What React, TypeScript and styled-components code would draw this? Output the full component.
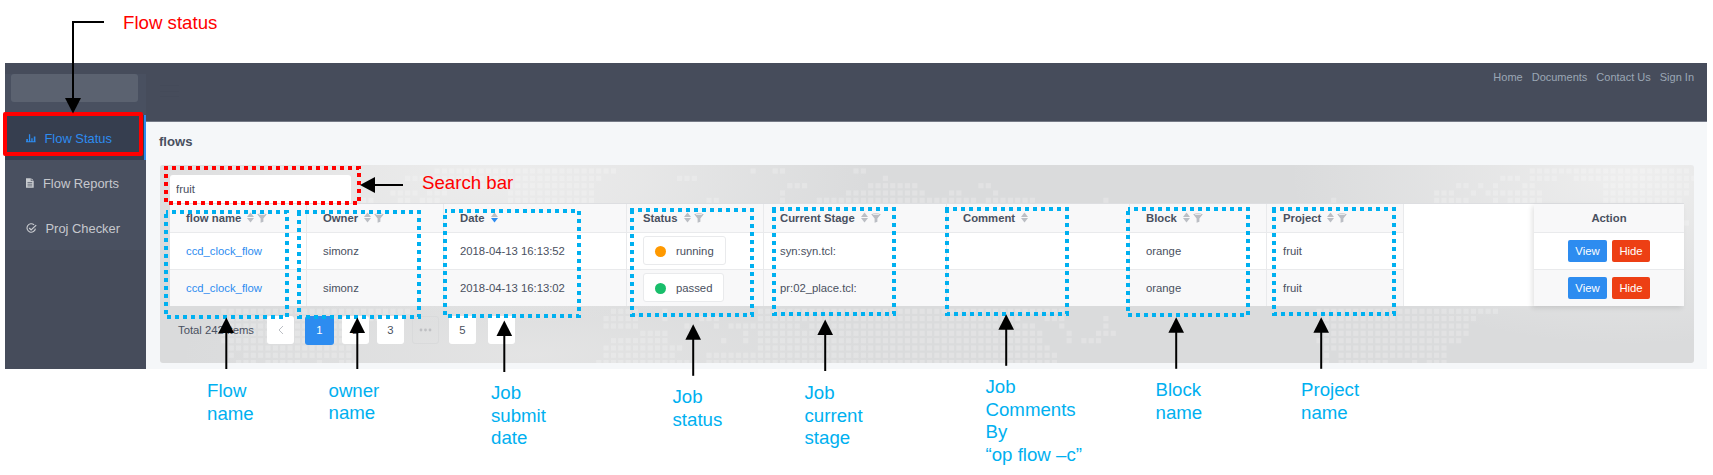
import React from "react";
import styled, { createGlobalStyle } from "styled-components";

const GlobalStyle = createGlobalStyle`
  *, *::before, *::after { box-sizing: border-box; }
  body {
    margin: 0;
    background: #fff;
    color: #495060;
    font-family: "Liberation Sans", Arial, sans-serif;
    font-size: 11.3px;
  }
`;

const Page = styled.div`
  position: relative;
  width: 1713px;
  height: 475px;
  padding: 63px 6px 0 5px;
  overflow: hidden;
`;

const Shell = styled.div`
  display: grid;
  grid-template-columns: 141px 1fr;
  height: 306px;
  background: #f5f7f9;
`;

const Sidebar = styled.aside`
  display: flex;
  flex-direction: column;
  background: #464c5b;
  padding-top: 11px;
`;

const MenuArea = styled.div`
  height: 176px;
  background: #495060;
`;

const Logo = styled.div`
  width: 127px;
  height: 28px;
  margin: 0 0 13px 6px;
  border-radius: 3px;
  background: #5b6270;
`;

const MenuItem = styled.a<{ $active?: boolean; $gap: number }>`
  display: flex;
  align-items: center;
  gap: ${(p) => p.$gap}px;
  height: 45px;
  padding: 1px 0 0 21px;
  font-size: 12.9px;
  color: ${(p) => (p.$active ? "#2d8cf0" : "rgba(255,255,255,0.7)")};
  background: ${(p) => (p.$active ? "#363e4f" : "transparent")};
  border-right: 2px solid ${(p) => (p.$active ? "#2d8cf0" : "transparent")};
`;

const Main = styled.div`
  display: flex;
  flex-direction: column;
`;

const Header = styled.header`
  display: flex;
  justify-content: space-between;
  align-items: flex-start;
  height: 59px;
  padding: 0 13px 0 14px;
  background: #464c5b;
  border-bottom: 1px solid #747986;
`;

const Burger = styled.svg`
  margin-top: 21px;
`;

const Nav = styled.nav`
  display: flex;
  gap: 9px;
  padding-top: 8px;
  line-height: 13px;
  font-size: 11px;
  color: #9ba7b5;
`;

const Content = styled.main`
  padding: 12px 13px 0 14px;
`;

const Title = styled.h1`
  margin: 0 0 0 -1px;
  height: 31px;
  font-size: 13.1px;
  line-height: 15px;
`;

const Panel = styled.section`
  position: relative;
  height: 198px;
  padding: 10px 10px 0 10px;
  border-radius: 3px;
  overflow: hidden;
  background:
    radial-gradient(ellipse 380px 150px at 330px 10px, rgba(238,238,238,0.9) 0%, rgba(236,236,236,0.7) 40%, rgba(236,236,236,0) 100%),
    radial-gradient(ellipse 340px 170px at 1470px 10px, rgba(240,240,240,0.9) 0%, rgba(238,238,238,0.6) 40%, rgba(238,238,238,0) 100%),
    radial-gradient(ellipse 350px 80px at 370px 190px, rgba(230,230,230,0.8) 0%, rgba(228,228,228,0) 100%),
    #dadbdc;
`;

const MapDots = styled.svg`
  position: absolute;
  inset: 0;
`;

const PanelBody = styled.div`
  position: relative;
`;

const Search = styled.input`
  display: block;
  width: 181px;
  height: 28px;
  padding: 0 6px 1px;
  border: 0;
  border-radius: 3px 3px 0 0;
  background: #fff;
  color: #495060;
  font: inherit;
  outline: none;
`;

const Table = styled.div`
  display: grid;
  grid-template-columns: 1234px 1fr 150px;
  height: 103px;
  background: #fff;
  border-top: 1px solid #dddee1;
`;

const DataGrid = styled.div`
  display: grid;
  grid-template-columns: 137px 137px 183px 137px 183px 183px 137px 137px;
  grid-template-rows: 29px 37px 36px;
`;

const Cell = styled.div<{ $tone: "head" | "plain" | "stripe" }>`
  display: flex;
  align-items: center;
  gap: 4px;
  padding: 0 0 1px 16px;
  white-space: nowrap;
  background: ${(p) => (p.$tone === "plain" ? "#fff" : "#f8f8f9")};
  border-right: 1px solid #e9eaec;
  border-bottom: ${(p) => (p.$tone === "stripe" ? "0" : "1px solid #e9eaec")};
  font-weight: ${(p) => (p.$tone === "head" ? 700 : 400)};
`;

const ActionColumn = styled.div`
  display: grid;
  grid-column: 3;
  grid-template-rows: 29px 37px 36px;
  box-shadow: -2px 2px 5px rgba(0, 0, 0, 0.11);
`;

const ActionCell = styled(Cell)`
  justify-content: center;
  gap: 5px;
  padding-left: 0;
  border-right: 0;
`;

const FlowLink = styled.a`
  color: #2d8cf0;
`;

const HeadIcons = styled.span`
  display: flex;
  align-items: center;
  gap: 3px;
  padding-left: 2px;
`;

const StatusTag = styled.span`
  display: flex;
  align-items: center;
  gap: 10px;
  height: 29px;
  padding: 1px 11px 0 11px;
  border: 1px solid #e9eaec;
  border-radius: 3px;
  background: #fff;
`;

const StatusDot = styled.span<{ $color: string }>`
  width: 11px;
  height: 11px;
  border-radius: 50%;
  background: ${(p) => p.$color};
`;

const Button = styled.button<{ $color: string; $width: number }>`
  width: ${(p) => p.$width}px;
  height: 22px;
  padding: 0;
  border: 0;
  border-radius: 2px;
  background: ${(p) => p.$color};
  color: #fff;
  font: inherit;
`;

const Pager = styled.div`
  display: flex;
  align-items: center;
  height: 30px;
  margin-top: 9px;
  padding-left: 8px;
`;

const Total = styled.span`
  width: 89px;
`;

const PageBox = styled.span<{ $active?: boolean; $ghost?: boolean; $gap: number }>`
  display: flex;
  align-items: center;
  justify-content: center;
  width: ${(p) => (p.$active ? 29 : 27)}px;
  height: ${(p) => (p.$active ? 29 : 28)}px;
  margin-right: ${(p) => p.$gap}px;
  border-radius: 3px;
  border: ${(p) => (p.$ghost ? "1px solid #d9dadb" : "0")};
  background: ${(p) => (p.$active ? "#2d8cf0" : p.$ghost ? "transparent" : "#fff")};
  color: ${(p) => (p.$active ? "#fff" : "#495060")};
`;

const Overlay = styled.svg`
  position: absolute;
  top: 0;
  left: 0;
`;

const Note = styled.div<{ $x: number; $y: number; $color: string }>`
  position: absolute;
  left: ${(p) => p.$x}px;
  top: ${(p) => p.$y}px;
  color: ${(p) => p.$color};
  font-size: 18.67px;
  line-height: 22.6px;
  white-space: pre;
`;

const RED = "#ff0000";
const BLUE = "#00b0f0";
const PITCH = 7.35;

// World map backdrop: for each row, its y and the [x, count] runs of dots.
const mapRows: [number, [number, number][]][] = [
  [6, [[276, 25], [593, 1], [617, 2], [696, 2], [1373, 22]]],
  [13.3, [[246, 3], [276, 23], [520, 3], [726, 1], [1343, 3], [1373, 4], [1418, 17]]],
  [20.7, [[268, 1], [306, 18], [630, 3], [711, 7], [822, 2], [1299, 2], [1321, 1], [1336, 1], [1365, 2], [1447, 12]]],
  [28, [[230, 4], [270, 3], [350, 12], [622, 1], [689, 11], [792, 2], [836, 1], [1277, 3], [1314, 1], [1328, 8], [1447, 12]]],
  [35.3, [[202, 2], [237, 2], [266, 3], [350, 12], [549, 2], [622, 1], [659, 22], [829, 7], [947, 1], [1173, 1], [1277, 5], [1336, 1], [1351, 5], [1447, 11]]],
  [58, [[1528, 1]]],
  [146.3, [[62, 26], [453, 4], [504, 1], [597, 42], [1159, 25]]],
  [153.6, [[62, 22], [445, 5], [504, 1], [540, 3], [597, 36], [885, 3], [947, 1], [1166, 21]]],
  [161, [[62, 20], [445, 5], [527, 1], [555, 1], [570, 4], [599, 6], [652, 31], [903, 1], [947, 1], [1166, 20]]],
  [168.3, [[62, 20], [482, 4], [585, 1], [599, 39], [910, 1], [940, 3], [1166, 20]]],
  [175.7, [[62, 19], [453, 8], [563, 1], [585, 1], [599, 39], [910, 1], [925, 3], [1159, 20]]],
  [183, [[69, 17], [445, 11], [599, 40], [1166, 17]]],
  [190.3, [[69, 1], [84, 15], [445, 10], [548, 7], [599, 41], [1166, 1], [1181, 15]]],
  [197.5, [[76, 3], [106, 5], [157, 1], [179, 3], [437, 14], [548, 7], [599, 41], [1166, 1], [1181, 7], [1254, 1], [1268, 3]]],
];

const SortIcon = ({ desc }: { desc?: boolean }) => (
  <svg width="7" height="11" viewBox="0 0 7 11">
    <path d="M3.5 0.5 L7 5 H0 Z" fill="#bbbec4" />
    <path d="M3.5 10.5 L7 6 H0 Z" fill={desc ? "#2d8cf0" : "#bbbec4"} />
  </svg>
);

const FilterIcon = () => (
  <svg width="10" height="10" viewBox="0 0 10 10">
    <path d="M0.2 1.3 Q5 -0.9 9.8 1.3 L6.4 5.5 V8.8 L3.6 9.8 V5.5 Z" fill="#bbbec4" />
    <ellipse cx="5" cy="1.4" rx="3.4" ry="0.6" fill="#e8e9eb" />
  </svg>
);

const BarsIcon = () => (
  <svg width="10" height="10" viewBox="0 0 10 10" fill="currentColor">
    <path d="M0.3 6h1.6v3H0.3zM2.9 1.3h1.3V9H2.9zM5.3 5.3h1.3V9H5.3zM7.8 3.4h1.6V9H7.8zM0 8.3h9.6V9.2H0z" />
  </svg>
);

const DocIcon = () => (
  <svg width="8" height="10" viewBox="0 0 8 10">
    <path d="M0 0.3h4.8V3H7.7V9.7H0z M5.4 0.3L7.7 2.5H5.4z" fill="currentColor" />
    <path d="M1.5 4.5h4.7M1.5 6.2h4.7M1.5 7.9h4.7" stroke="#495060" strokeWidth="0.7" />
  </svg>
);

const CheckIcon = () => (
  <svg width="11" height="11" viewBox="0 0 11 11" fill="none" stroke="currentColor" strokeWidth="1.1">
    <path d="M8.1 1.9A4.2 4.2 0 1 0 9.4 5.6" />
    <path d="M3.2 5 L5.1 6.9 L10.2 2.1" strokeWidth="1.3" />
  </svg>
);

const columns = [
  { name: "flow name", filter: true },
  { name: "Owner", filter: true },
  { name: "Date", filter: false },
  { name: "Status", filter: true },
  { name: "Current Stage", filter: true },
  { name: "Comment", filter: false },
  { name: "Block", filter: true },
  { name: "Project", filter: true },
];

const flows = [
  { date: "2018-04-13 16:13:52", status: "running", color: "#ff9900", stage: "syn:syn.tcl:" },
  { date: "2018-04-13 16:13:02", status: "passed", color: "#19be6b", stage: "pr:02_place.tcl:" },
];

const frames = [
  { x: 166, y: 168, w: 193, h: 35, color: RED },
  { x: 166, y: 212, w: 121, h: 105, color: BLUE },
  { x: 299, y: 212, w: 120, h: 105, color: BLUE },
  { x: 445, y: 211, w: 134, h: 105, color: BLUE },
  { x: 632, y: 210, w: 120, h: 105, color: BLUE },
  { x: 774, y: 209, w: 120, h: 105, color: BLUE },
  { x: 947, y: 209, w: 120, h: 105, color: BLUE },
  { x: 1128, y: 209, w: 120, h: 106, color: BLUE },
  { x: 1274, y: 209, w: 120, h: 105, color: BLUE },
];

const arrows = [
  [226.3, 317.5], [357.3, 317.5], [504.3, 320.5], [693.2, 324.3],
  [825.2, 319.5], [1006.2, 314.3], [1176.2, 317.3], [1321.2, 317.3],
];

const notes = [
  { x: 123, y: 12, color: RED, text: "Flow status" },
  { x: 422, y: 172, color: RED, text: "Search bar" },
  { x: 207, y: 380, color: BLUE, text: "Flow\nname" },
  { x: 328.5, y: 379.5, color: BLUE, text: "owner\nname" },
  { x: 491, y: 382, color: BLUE, text: "Job\nsubmit\ndate" },
  { x: 672.5, y: 386, color: BLUE, text: "Job\nstatus" },
  { x: 804.5, y: 382, color: BLUE, text: "Job\ncurrent\nstage" },
  { x: 985.5, y: 376, color: BLUE, text: "Job\nComments\nBy\n“op flow –c”" },
  { x: 1155.5, y: 379, color: BLUE, text: "Block\nname" },
  { x: 1301, y: 379, color: BLUE, text: "Project\nname" },
];

function WorldMap() {
  return (
    <MapDots width="1534" height="198" fill="#fff" fillOpacity="0.21">
      {mapRows.map(([y, runs]) =>
        runs.map(([x, count]) => {
          const first = Math.round((x - 696) / PITCH);
          return Array.from({ length: count }, (_, i) => (
            <rect key={`${y}-${x}-${i}`} x={696 + (first + i) * PITCH - 2.6} y={y - 2.6} width="5.2" height="5.2" />
          ));
        })
      )}
    </MapDots>
  );
}

function FlowTable() {
  return (
    <Table>
      <DataGrid>
        {columns.map((c) => (
          <Cell key={c.name} $tone="head">
            {c.name}
            <HeadIcons>
              <SortIcon desc={c.name === "Date"} />
              {c.filter && <FilterIcon />}
            </HeadIcons>
          </Cell>
        ))}
        {flows.map((f, i) => {
          const tone = i % 2 ? "stripe" : "plain";
          return (
            <React.Fragment key={f.date}>
              <Cell $tone={tone}><FlowLink>ccd_clock_flow</FlowLink></Cell>
              <Cell $tone={tone}>simonz</Cell>
              <Cell $tone={tone}>{f.date}</Cell>
              <Cell $tone={tone}>
                <StatusTag><StatusDot $color={f.color} />{f.status}</StatusTag>
              </Cell>
              <Cell $tone={tone}>{f.stage}</Cell>
              <Cell $tone={tone} />
              <Cell $tone={tone}>orange</Cell>
              <Cell $tone={tone}>fruit</Cell>
            </React.Fragment>
          );
        })}
      </DataGrid>
      <ActionColumn>
        <ActionCell $tone="head">Action</ActionCell>
        {flows.map((f, i) => (
          <ActionCell key={f.date} $tone={i % 2 ? "stripe" : "plain"}>
            <Button $color="#2d8cf0" $width={39}>View</Button>
            <Button $color="#ed3f14" $width={38}>Hide</Button>
          </ActionCell>
        ))}
      </ActionColumn>
    </Table>
  );
}

function Annotations() {
  return (
    <>
      <Overlay width="1713" height="475" fill="none">
        <rect x="5" y="114" width="136" height="40" stroke={RED} strokeWidth="4" strokeLinejoin="round" />
        {frames.map((f) => (
          <rect key={`${f.x}-${f.y}`} x={f.x} y={f.y} width={f.w} height={f.h} stroke={f.color} strokeWidth="4" strokeDasharray="4 4" strokeDashoffset="2" />
        ))}
        <path d="M104 22H73V99" stroke="#000" strokeWidth="2" />
        <path d="M65 98H81L73 113.5Z" fill="#000" />
        <path d="M374 185H403" stroke="#000" strokeWidth="2" />
        <path d="M360 185L375 177V193Z" fill="#000" />
        {arrows.map(([x, y]) => (
          <g key={x}>
            <path d={`M${x} ${y + 14}V${y + 51.5}`} stroke="#000" strokeWidth="2" />
            <path d={`M${x} ${y}L${x + 7.8} ${y + 15.5}H${x - 7.8}Z`} fill="#000" />
          </g>
        ))}
      </Overlay>
      {notes.map((n) => (
        <Note key={n.text} $x={n.x} $y={n.y} $color={n.color}>{n.text}</Note>
      ))}
    </>
  );
}

export default function App() {
  return (
    <Page>
      <GlobalStyle />
      <Shell>
        <Sidebar>
          <MenuArea>
            <Logo />
            <MenuItem $active $gap={8.5}><BarsIcon />Flow Status</MenuItem>
            <MenuItem $gap={9}><DocIcon />Flow Reports</MenuItem>
            <MenuItem $gap={8.5}><CheckIcon />Proj Checker</MenuItem>
          </MenuArea>
        </Sidebar>
        <Main>
          <Header>
            <Burger width="19" height="14" stroke="#444a59" strokeWidth="1">
              <path d="M0 1.5H19M0 7.5H19M0 12.5H19" />
            </Burger>
            <Nav>
              <span>Home</span>
              <span>Documents</span>
              <span>Contact Us</span>
              <span>Sign In</span>
            </Nav>
          </Header>
          <Content>
            <Title>flows</Title>
            <Panel>
              <WorldMap />
              <PanelBody>
                <Search defaultValue="fruit" />
                <FlowTable />
                <Pager>
                  <Total>Total 242 items</Total>
                  <PageBox $gap={11}>
                    <svg width="6" height="10" fill="none" stroke="#bbbec4"><path d="M5 1L1 5L5 9" /></svg>
                  </PageBox>
                  <PageBox $active $gap={8}>1</PageBox>
                  <PageBox $gap={8}>2</PageBox>
                  <PageBox $gap={8}>3</PageBox>
                  <PageBox $ghost $gap={10}>
                    <svg width="13" height="4" fill="#bfc0c3"><circle cx="2" cy="2" r="1.4" /><circle cx="6.5" cy="2" r="1.4" /><circle cx="11" cy="2" r="1.4" /></svg>
                  </PageBox>
                  <PageBox $gap={12}>5</PageBox>
                  <PageBox $gap={0} />
                </Pager>
              </PanelBody>
            </Panel>
          </Content>
        </Main>
      </Shell>
      <Annotations />
    </Page>
  );
}
